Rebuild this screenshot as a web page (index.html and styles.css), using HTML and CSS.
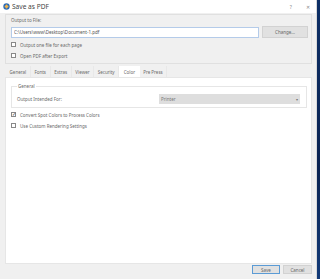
FILE: index.html
```html
<!DOCTYPE html>
<html lang="en">
<head>
    <meta charset="UTF-8">
    <title>Save as PDF</title>
    <link rel="stylesheet" href="styles.css">
</head>
<body>
    <div class="screen">
        <div class="window">
            <div class="titlebar">
                <svg class="app-icon" width="7" height="7" viewBox="0 0 7 7">
                    <circle cx="3.5" cy="3.5" r="3.2" fill="#2f6db5"/>
                    <path d="M1.5 3.5 L3.5 1.2 L5.6 3.5 L3.5 5.8 Z" fill="#f0b24a"/>
                </svg>
                <span class="title">Save as PDF</span>
                <span class="tb-btn">?</span>
                <span class="tb-btn close">&#x2715;</span>
            </div>

            <div class="content">
                <div class="group output">
                    <div class="group-label">Output to File:</div>
                    <div class="file-row">
                        <input class="file-input" type="text" value="C:\Users\www\Desktop\Document-1.pdf">
                        <button class="btn">Change...</button>
                    </div>
                    <label class="check"><span class="box"></span>Output one file for each page</label>
                    <label class="check"><span class="box"></span>Open PDF after Export</label>
                </div>

                <div class="tabs">
                    <span class="tab">General</span>
                    <span class="tab">Fonts</span>
                    <span class="tab">Extras</span>
                    <span class="tab">Viewer</span>
                    <span class="tab">Security</span>
                    <span class="tab active">Color</span>
                    <span class="tab">Pre Press</span>
                </div>

                <div class="panel">
                    <fieldset class="general">
                        <legend>General</legend>
                        <div class="intent-row">
                            <span>Output Intended For:</span>
                            <div class="select">Printer<span class="arrow">&#x25BE;</span></div>
                        </div>
                    </fieldset>
                    <label class="check"><span class="box checked">&#x2713;</span>Convert Spot Colors to Process Colors</label>
                    <label class="check"><span class="box"></span>Use Custom Rendering Settings</label>
                </div>

                <div class="actions">
                    <button class="btn save">Save</button>
                    <button class="btn">Cancel</button>
                </div>
            </div>
        </div>
        <div class="desktop"></div>
    </div>
</body>
</html>
```

FILE: styles.css
```css
*{
    margin: 0;
    padding: 0;
    box-sizing: border-box;
}

body{
    width: 320px;
    height: 279px;
    overflow: hidden;
    font-family: "Noto Sans", "Liberation Sans", sans-serif;
    font-size: 4.5px;
    color: #6a6a6a;
    background: #f0f0f0;
}

.screen{
    display: flex;
    height: 279px;
}

.window{
    width: 317px;
    background: #f0f0f0;
    border-right: 1px solid #d8d8d8;
}

.desktop{
    flex: 1;
    background: linear-gradient(#0d2f66, #0a2352 60%, #123a78);
}

.titlebar{
    height: 13px;
    background: #fff;
    display: flex;
    align-items: center;
    padding: 0 6px 0 3px;
}
.app-icon{
    margin-right: 2px;
}
.title{
    flex: 1;
    font-size: 6.6px;
    color: #444;
}
.tb-btn{
    font-size: 5px;
    color: #888;
    margin-left: 14px;
}

.content{
    padding: 1px 4px 0 5px;
}

.group.output{
    height: 50px;
    border: 1px solid #e0e0e0;
    padding: 2px 0 0 5px;
}
.group-label{
    line-height: 6px;
}
.file-row{
    display: flex;
    align-items: center;
    margin-top: 3px;
}
.file-input{
    width: 248px;
    height: 11px;
    border: 1px solid #b4cbe9;
    background: #fff;
    font: inherit;
    color: #555;
    padding: 0 2px;
    outline: none;
}
.btn{
    font: inherit;
    color: #666;
    background: #e1e1e1;
    border: 1px solid #d2d2d2;
}
.file-row .btn{
    width: 46px;
    height: 12px;
    margin-left: 3px;
}

.check{
    display: flex;
    align-items: center;
    height: 11px;
}
.output .check:first-of-type{
    margin-top: 1px;
}
.box{
    width: 5px;
    height: 5px;
    border: 1px solid #888;
    background: #fff;
    margin-right: 4px;
    font-size: 4.5px;
    line-height: 3px;
    text-align: center;
    color: #444;
}

.tabs{
    display: flex;
    height: 11px;
    margin-top: 2px;
    align-items: stretch;
    padding-left: 1px;
}
.tab{
    display: flex;
    align-items: center;
    padding: 0 3.6px;
    border-right: 1px solid #e8e8e8;
}
.tab.active{
    background: #fff;
    padding: 0 4.5px;
    border: none;
}

.panel{
    height: 187px;
    width: 307px;
    background: #fff;
    border: 1px solid #e6e6e6;
    padding: 5px 5px 0 5px;
}

.general{
    border: 1px solid #e6e6e6;
    height: 25px;
    width: 296px;
    padding: 0 6px 0 5px;
}
.general legend{
    padding: 0 1px;
}
.intent-row{
    display: flex;
    align-items: center;
    justify-content: space-between;
    margin-top: 5px;
}
.select{
    width: 141px;
    height: 10px;
    background: #dedede;
    display: flex;
    align-items: center;
    justify-content: space-between;
    padding: 0 2px;
    color: #777;
}
.arrow{
    font-size: 4px;
}
.panel .check:first-of-type{
    margin-top: 1px;
}

.actions{
    display: flex;
    justify-content: flex-end;
    gap: 3px;
    margin-top: 1px;
}
.actions .btn{
    width: 29px;
    height: 9px;
}
.btn.save{
    width: 28px;
    border-color: #5b9bd5;
}
```
